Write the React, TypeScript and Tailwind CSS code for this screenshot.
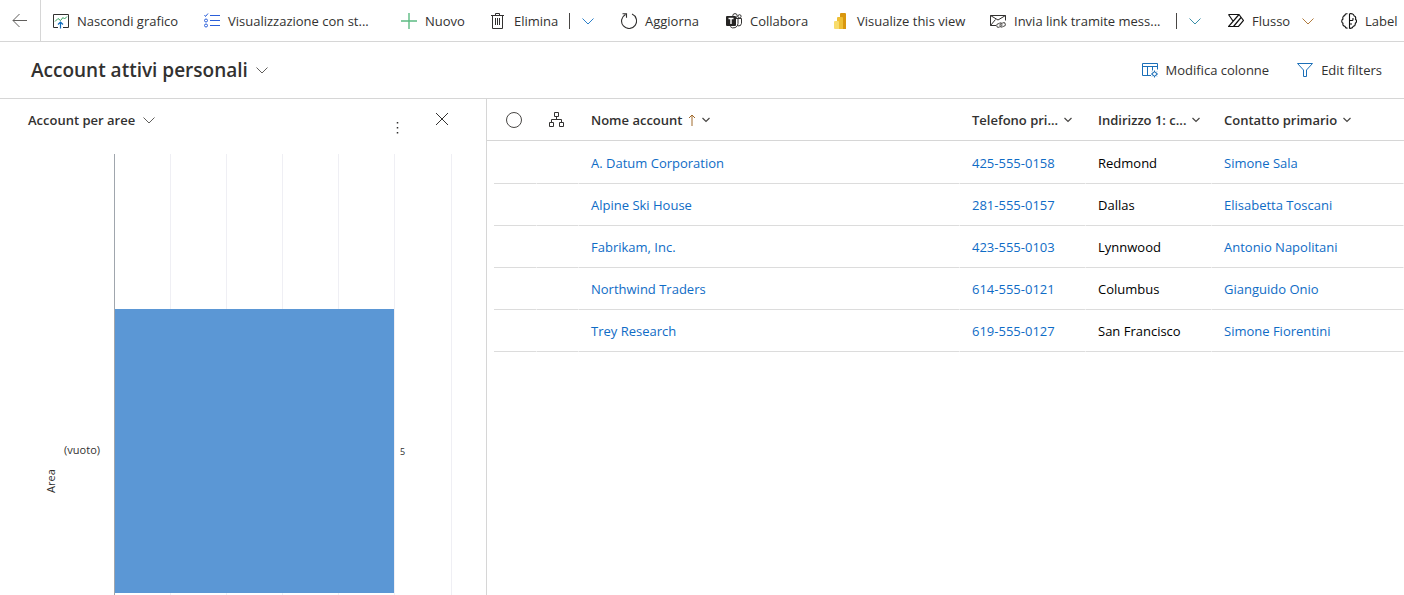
import React from 'react';

interface IconProps {
  children: React.ReactNode;
  color?: string;
}

function Icon({ children, color = '#323130' }: IconProps) {
  return (
    <svg
      width="16"
      height="16"
      viewBox="0 0 16 16"
      fill="none"
      stroke={color}
      strokeWidth="1"
      className="shrink-0"
      aria-hidden="true"
    >
      {children}
    </svg>
  );
}

function ChevronIcon({ color = '#605e5c' }: { color?: string }) {
  return (
    <svg width="12" height="12" viewBox="0 0 12 12" fill="none" stroke={color} className="shrink-0" aria-hidden="true">
      <path d="M0.5 3.5 6 9l5.5-5.5" />
    </svg>
  );
}

function SmallChevronIcon() {
  return (
    <svg width="8" height="8" viewBox="0 0 8 8" fill="none" stroke="#484644" strokeWidth="1.2" className="shrink-0" aria-hidden="true">
      <path d="M0.5 2 4 5.5 7.5 2" />
    </svg>
  );
}

const ChartIcon = () => (
  <Icon>
    <path d="M5 14.5H.5v-13h15v13H10" />
    <path d="M2 8.5 5 5.500l2.500 2L10 4.500l1.500 1.500L14 3.500" stroke="#2f9e5b" />
    <path d="M7.500 15.500V9.500M5 11.500 7.500 9 10 11.500" stroke="#0f6cbd" strokeWidth="1.200" />
  </Icon>
);

const ListIcon = () => (
  <Icon color="#2b5fd9">
    <path d="M6 2.500h10M6 7.500h10M6 12.500h10" />
    <path d="M.5 2 1.500 3.500 4 .5" />
    <circle cx="2" cy="7.500" r="1.500" />
    <circle cx="2" cy="12.500" r="1.500" />
  </Icon>
);

const PlusIcon = () => (
  <Icon color="#5cbb82">
    <path d="M8 0v16M0 8h16" strokeWidth="1.400" />
  </Icon>
);

const TrashIcon = () => (
  <Icon>
    <path d="M1 2.500h13M5.500 2.500v-2h4v2M2.500 2.500v13h10v-13M5.500 5v7M7.500 5v7M9.500 5v7" />
  </Icon>
);

const RefreshIcon = () => (
  <Icon>
    <path d="M11 1.100A7.500 7.500 0 1 1 4.500 1.400M1.500.8h4v4" strokeWidth="1.100" />
  </Icon>
);

const TeamsIcon = () => (
  <Icon>
    <circle cx="9" cy="2.800" r="2.200" />
    <circle cx="13.500" cy="3.300" r="1.600" />
    <path d="M10 5.500h5.500v4.800a3 3 0 0 1-3.500 2.600M12 5.500v5a4.500 4.500 0 0 1-7.800 3" />
    <rect x="0" y="3" width="10" height="10" rx="1" fill="#252423" stroke="none" />
    <path d="M2.500 5.500h5M5 5.500v5.500" stroke="#fff" strokeWidth="1.400" />
  </Icon>
);

const PowerBiIcon = () => (
  <Icon>
    <path d="M7 1a1 1 0 0 1 1-1h4a1 1 0 0 1 1 1v15H7z" fill="#d9970f" stroke="none" />
    <path d="M4 5a1 1 0 0 1 1-1h4a1 1 0 0 1 1 1v11H4z" fill="#eebf35" stroke="none" />
    <path d="M1 9a1 1 0 0 1 1-1h3a1 1 0 0 1 1 1v7H2a1 1 0 0 1-1-1z" fill="#f8dc6c" stroke="none" />
  </Icon>
);

const MailLinkIcon = () => (
  <Icon>
    <path d="M6 12.500H.5v-10h15v5M.5 2.500 8 7l7.500-4.500M.5 12.500l5-6" />
    <g stroke="#605e5c">
      <rect x="6.500" y="10.500" width="5.500" height="3.500" rx="1.700" transform="rotate(-25 9 12)" />
      <rect x="10" y="10" width="5.500" height="3.500" rx="1.700" transform="rotate(-25 13 12)" />
    </g>
  </Icon>
);

const FlowIcon = () => (
  <Icon color="#111">
    <path d="M.5 1.500H11L15.500 7.500l-5 6H.5L11 1.500M.5 1.500 5 8M5.500 13.500l7.500-9" strokeWidth="1.200" />
  </Icon>
);

const BrainIcon = () => (
  <Icon color="#111">
    <path
      d="M6.500.8C5 .4 4 1.300 3.700 2.600 2 2.900 1.500 4.500 2 6 .3 7 .3 9.300 2 10.200c-.5 1.800.4 3 2 3.200.3 1.200 1.300 1.900 2.500 1.700M8.500.8c2.500-.5 4.300.3 4.500 2 1.500.5 2 1.900 1.500 3.400 1.500 1.200 1.300 3.300-.2 4.100.2 1.800-.7 2.900-2.100 3.100-.3 1.600-1.800 2.100-3.700 1.900V.8M9 7.500h2a1 1 0 0 0 1-1V5M9 11h2"
      strokeWidth="1.100"
    />
  </Icon>
);

const ColumnsIcon = () => (
  <Icon color="#1b6fb8">
    <path d="M9 13.500H.5v-12h15v6M.5 4.500h15M5.500 4.500v9M10.500 4.500v4" />
    <circle cx="12.500" cy="12" r="2" />
    <path d="M12.500 8.500V10M12.500 14v1.500M9 12h1.500M14.500 12H16M10.200 9.700l.9.900M13.900 13.400l.9.900M10.200 14.300l.9-.9M13.900 10.600l.9-.9" />
  </Icon>
);

const FilterIcon = () => (
  <Icon color="#1b6fb8">
    <path d="M.5 1.500h15L9.500 8v6.500h-3V8z" />
  </Icon>
);

const HierarchyIcon = () => (
  <Icon>
    <path d="M5.500.5h4v4h-4zM.5 10.500h4v4h-4zM10.500 10.500h4v4h-4zM7.500 4.500v3M2.500 10.500v-3h10v3" />
  </Icon>
);

interface Command {
  label: string;
  icon: React.ReactNode;
  width: string;
  split?: boolean;
  menu?: boolean;
  chevron?: string;
}

const commands: Command[] = [
  { label: 'Nascondi grafico', icon: <ChartIcon />, width: 'min-w-[127px]' },
  { label: 'Visualizzazione con st...', icon: <ListIcon />, width: 'min-w-[173px]' },
  { label: 'Nuovo', icon: <PlusIcon />, width: 'min-w-[65px]' },
  { label: 'Elimina', icon: <TrashIcon />, width: 'min-w-[107px]', split: true, chevron: '#2b7fc9' },
  { label: 'Aggiorna', icon: <RefreshIcon />, width: 'min-w-[81px]' },
  { label: 'Collabora', icon: <TeamsIcon />, width: 'min-w-[83px]' },
  { label: 'Visualize this view', icon: <PowerBiIcon />, width: 'min-w-[133px]' },
  { label: 'Invia link tramite mess...', icon: <MailLinkIcon />, width: 'min-w-[214px]', split: true, chevron: '#3a8fa8' },
  { label: 'Flusso', icon: <FlowIcon />, width: 'min-w-[89px]', menu: true, chevron: '#b07a3c' },
  { label: 'Label', icon: <BrainIcon />, width: 'min-w-[57px]' },
];

const accounts = [
  { name: 'A. Datum Corporation', phone: '425-555-0158', city: 'Redmond', contact: 'Simone Sala' },
  { name: 'Alpine Ski House', phone: '281-555-0157', city: 'Dallas', contact: 'Elisabetta Toscani' },
  { name: 'Fabrikam, Inc.', phone: '423-555-0103', city: 'Lynnwood', contact: 'Antonio Napolitani' },
  { name: 'Northwind Traders', phone: '614-555-0121', city: 'Columbus', contact: 'Gianguido Onio' },
  { name: 'Trey Research', phone: '619-555-0127', city: 'San Francisco', contact: 'Simone Fiorentini' },
];

function CommandBar() {
  return (
    <header className="flex h-[42px] shrink-0 items-stretch overflow-hidden border-b border-[#d6d6d6]">
      <button className="flex w-[41px] shrink-0 items-center justify-center border-r border-[#d6d6d6]" aria-label="Indietro">
        <Icon color="#605e5c">
          <path d="M1 7.500h14M7.500 1 1 7.500 7.500 14" />
        </Icon>
      </button>
      <div className="flex items-center gap-6 pl-3">
        {commands.map(({ label, icon, width, split, menu, chevron }) => (
          <div key={label} className={`flex shrink-0 items-center justify-between ${width}`}>
            <button className="flex items-center gap-2 whitespace-nowrap">
              {icon}
              {label}
              {menu && (
                <span className="pl-1">
                  <ChevronIcon color={chevron} />
                </span>
              )}
            </button>
            {split && (
              <button className="flex items-center gap-3 pr-[3px]" aria-label={`Altre opzioni per ${label}`}>
                <span className="h-4 w-px bg-[#484644]" />
                <ChevronIcon color={chevron} />
              </button>
            )}
          </div>
        ))}
      </div>
    </header>
  );
}

function ViewHeader() {
  return (
    <div className="flex h-[57px] shrink-0 items-center justify-between border-b border-[#d6d6d6] pr-[22px] pl-[31px]">
      <button className="flex items-center gap-2">
        <h1 className="text-[19px] leading-7 font-semibold">Account attivi personali</h1>
        <ChevronIcon />
      </button>
      <div className="flex items-center gap-7">
        <button className="flex items-center gap-2">
          <ColumnsIcon />
          Modifica colonne
        </button>
        <button className="flex items-center gap-2">
          <FilterIcon />
          Edit filters
        </button>
      </div>
    </div>
  );
}

function ChartPanel() {
  const gridLines = [170, 226, 282, 338, 394, 451];

  return (
    <section className="w-[487px] shrink-0 overflow-hidden border-r border-[#d6d6d6]">
      <div className="flex h-[55px] items-start pt-[11px] pr-9 pl-7">
        <button className="flex items-center gap-2 leading-5 font-semibold">
          Account per aree
          <ChevronIcon />
        </button>
        <button className="mt-2.5 ml-auto" aria-label="Altri comandi">
          <Icon>
            <path d="M7.500 2v1.500M7.500 7v1.500M7.500 12v1.500" strokeWidth="1.500" />
          </Icon>
        </button>
        <button className="mt-px ml-7" aria-label="Chiudi">
          <Icon>
            <path d="m2 2 12 12M14 2 2 14" />
          </Icon>
        </button>
      </div>
      <svg width="486" height="441" role="img" aria-label="Account per aree" fill="#323130">
        {gridLines.map((x) => (
          <rect key={x} x={x} y="0" width="1" height="441" fill="#efeff4" />
        ))}
        <rect x="115" y="155" width="279" height="284" fill="#5b97d5" />
        <rect x="114" y="0" width="1" height="441" fill="#a0a6ad" />
        <text x="100" y="300" textAnchor="end" fontSize="11">
          (vuoto)
        </text>
        <text x="400" y="301" fontSize="9">
          5
        </text>
        <text transform="translate(55 327) rotate(-90)" textAnchor="middle" fontSize="11">
          Area
        </text>
      </svg>
    </section>
  );
}

function HeaderButton({ label, sorted }: { label: string; sorted?: boolean }) {
  return (
    <button className="flex items-center gap-1.5 whitespace-nowrap">
      {label}
      {sorted && (
        <svg width="8" height="12" viewBox="0 0 8 12" fill="none" stroke="#a06a2c" aria-hidden="true">
          <path d="M4 12V1M1 4l3-3 3 3" />
        </svg>
      )}
      <SmallChevronIcon />
    </button>
  );
}

function AccountGrid() {
  const th = 'h-[42px] border-b border-[#d6d6d6] p-0 pl-3 text-left font-semibold';
  const td = 'h-[42px] border-r border-b border-r-white border-b-[#dcdcdc] p-0 pl-3';
  const link = 'text-[#0f6cc6]';

  return (
    <section className="min-w-0 flex-1">
      <table className="w-full table-fixed border-separate border-spacing-0">
        <colgroup>
          <col className="w-[7px]" />
          <col className="w-[43px]" />
          <col className="w-[42px]" />
          <col />
          <col className="w-[126px]" />
          <col className="w-[126px]" />
          <col className="w-[192px]" />
        </colgroup>
        <thead>
          <tr>
            <th className="border-b border-[#d6d6d6] p-0" />
            <th className={th}>
              <input
                type="checkbox"
                aria-label="Seleziona tutto"
                className="block size-4 appearance-none rounded-full border border-[#484644]"
              />
            </th>
            <th className={th}>
              <HierarchyIcon />
            </th>
            <th className={th}>
              <HeaderButton label="Nome account" sorted />
            </th>
            <th className={th}>
              <HeaderButton label="Telefono pri..." />
            </th>
            <th className={th}>
              <HeaderButton label="Indirizzo 1: c..." />
            </th>
            <th className={th}>
              <HeaderButton label="Contatto primario" />
            </th>
          </tr>
        </thead>
        <tbody className="[&>tr:first-child>td]:h-[43px] [&>tr:first-child>td]:pt-px">
          {accounts.map(({ name, phone, city, contact }) => (
            <tr key={name}>
              <td className="p-0" />
              <td className={td} />
              <td className={td} />
              <td className={td}>
                <a href="#" className={link}>{name}</a>
              </td>
              <td className={td}>
                <a href="#" className={link}>{phone}</a>
              </td>
              <td className={`${td} text-black`}>{city}</td>
              <td className={td}>
                <a href="#" className={link}>{contact}</a>
              </td>
            </tr>
          ))}
        </tbody>
      </table>
    </section>
  );
}

export default function App() {
  return (
    <div className="flex min-h-screen flex-col overflow-hidden bg-white font-['Open_Sans','Noto_Sans',sans-serif] text-[13px] leading-5 text-[#323130]">
      <CommandBar />
      <ViewHeader />
      <main className="flex flex-1">
        <ChartPanel />
        <AccountGrid />
      </main>
    </div>
  );
}
